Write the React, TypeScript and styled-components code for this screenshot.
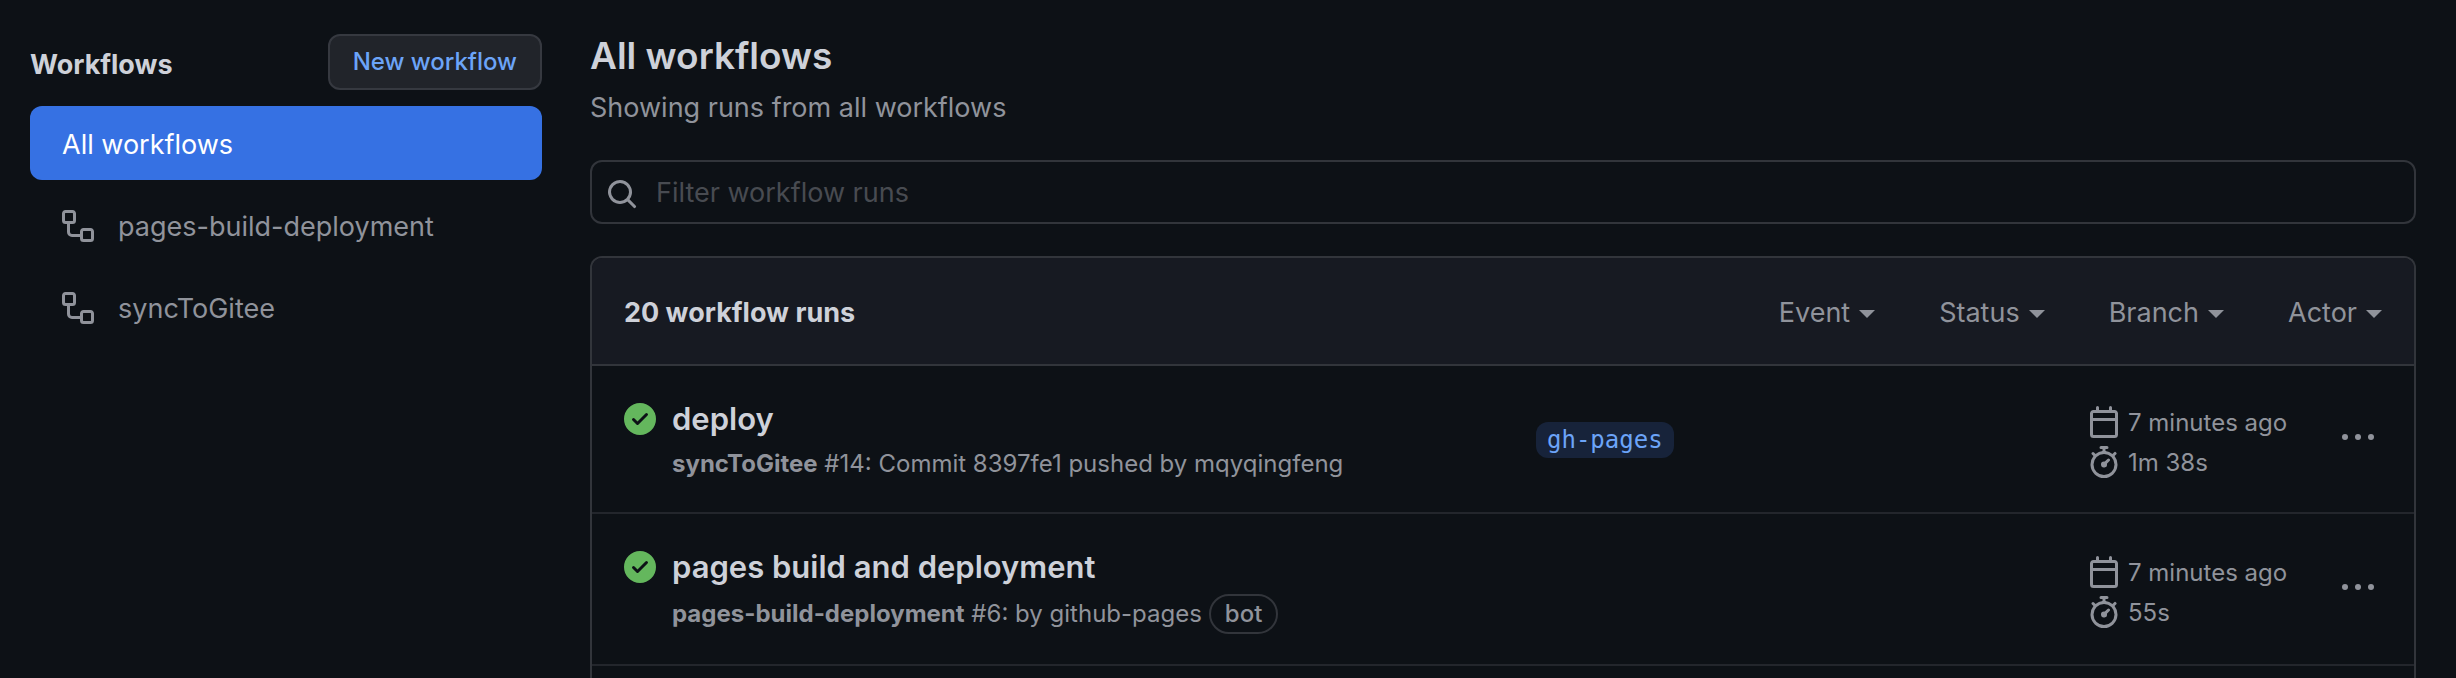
import React from "react";
import styled, { createGlobalStyle } from "styled-components";

const color = {
  canvas: "#0d1116",
  subtle: "#171a22",
  border: "#32353b",
  borderMuted: "#23262c",
  text: "#ced1d9",
  muted: "#90939b",
  placeholder: "#484b51",
  accent: "#3671e3",
  link: "#6ca4f8",
  branchBg: "#17233a",
  success: "#64b75d",
};

const GlobalStyle = createGlobalStyle`
  *, *::before, *::after { box-sizing: border-box; }
  body {
    margin: 0;
    background: ${color.canvas};
    color: ${color.text};
    font-family: Inter, "Liberation Sans", sans-serif;
    font-size: 27px;
  }
  h1, h2, h3, p, ul { margin: 0; padding: 0; }
  ul { list-style: none; }
  a { color: inherit; text-decoration: none; }
  button, input { font: inherit; color: inherit; }
`;

const Page = styled.div`
  display: flex;
  gap: 48px;
  min-height: 100vh;
  padding: 34px 40px 0 30px;
`;

const Sidebar = styled.aside`
  flex: 0 0 512px;
`;

const SidebarHeader = styled.div`
  display: flex;
  align-items: flex-end;
  justify-content: space-between;
  margin-bottom: 16px;
`;

const SidebarTitle = styled.h2`
  font-size: 27px;
  font-weight: 700;
  line-height: 50px;
`;

const NewWorkflowButton = styled.button`
  height: 56px;
  padding: 0 23px 2px;
  border: 2px solid #363940;
  border-radius: 12px;
  background: #21242a;
  color: ${color.link};
  font-size: 24px;
  font-weight: 500;
  cursor: pointer;
`;

const NavList = styled.ul`
  display: flex;
  flex-direction: column;
  gap: 8px;
`;

const NavLink = styled.a<{ $active?: boolean }>`
  display: flex;
  align-items: center;
  gap: 24px;
  height: 74px;
  padding: 2px 32px 0;
  border-radius: 12px;
  background: ${(p) => (p.$active ? color.accent : "transparent")};
  color: ${(p) => (p.$active ? "#ffffff" : color.muted)};
`;

const Main = styled.main`
  display: flex;
  flex: 1;
  flex-direction: column;
  min-width: 0;
`;

const Title = styled.h1`
  margin-bottom: 8px;
  font-size: 37px;
  font-weight: 600;
  line-height: 44px;
`;

const Subtitle = styled.p`
  margin-bottom: 30px;
  color: ${color.muted};
  line-height: 44px;
`;

const SearchBox = styled.label`
  display: flex;
  align-items: center;
  gap: 18px;
  height: 64px;
  margin-bottom: 32px;
  padding: 0 14px;
  border: 2px solid ${color.border};
  border-radius: 12px;
  color: ${color.muted};
`;

const SearchInput = styled.input`
  flex: 1;
  min-width: 0;
  padding: 0;
  border: 0;
  outline: 0;
  background: transparent;
  color: ${color.text};
  &::placeholder {
    color: ${color.placeholder};
    opacity: 1;
  }
`;

const RunsBox = styled.section`
  flex: 1;
  border: 2px solid ${color.border};
  border-bottom: 0;
  border-radius: 12px 12px 0 0;
  overflow: hidden;
`;

const RunsHeader = styled.header`
  display: flex;
  align-items: center;
  justify-content: space-between;
  height: 108px;
  padding: 2px 32px 0;
  border-bottom: 2px solid ${color.border};
  background: ${color.subtle};
`;

const RunsCount = styled.h2`
  font-size: 27px;
  font-weight: 700;
`;

const Filters = styled.div`
  display: flex;
  gap: 64px;
`;

const FilterButton = styled.button`
  display: flex;
  align-items: center;
  gap: 9px;
  padding: 0;
  border: 0;
  background: none;
  color: ${color.muted};
  cursor: pointer;
  &::after {
    content: "";
    margin-top: 4px;
    border: 8px solid transparent;
    border-top-color: currentColor;
    border-bottom: 0;
  }
`;

const RunRow = styled.li`
  display: grid;
  grid-template-columns: minmax(0, 38fr) minmax(0, 23fr) 254px 40px;
  align-items: center;
  padding: 32px 32px 30px;
  border-bottom: 2px solid ${color.borderMuted};
  color: ${color.muted};
  font-size: 24px;
`;

const RunInfo = styled.div`
  display: grid;
  grid-template-columns: 32px minmax(0, 1fr);
  column-gap: 16px;
  row-gap: 6px;
  align-items: center;
`;

const RunTitle = styled.h3`
  color: ${color.text};
  font-size: 31px;
  font-weight: 600;
  line-height: 42px;
`;

const RunMeta = styled.p`
  grid-column: 2;
  line-height: 36px;
  display: flex;
  align-items: center;
  gap: 7px;
`;

const BotLabel = styled.span`
  height: 40px;
  padding: 0 14px;
  border: 2px solid ${color.border};
  border-radius: 20px;
  font-weight: 500;
`;

const BranchLink = styled.a`
  display: inline-block;
  padding: 0 11px;
  border-radius: 12px;
  background: ${color.branchBg};
  color: ${color.link};
  font-family: "DejaVu Sans Mono", "Liberation Mono", monospace;
  line-height: 36px;
`;

const Timing = styled.div`
  padding-top: 4px;
`;

const TimingLine = styled.div`
  display: flex;
  align-items: center;
  gap: 8px;
  line-height: 40px;
`;

const TimingText = styled.span`
  padding-top: 2px;
  line-height: 38px;
`;

const MenuButton = styled.button`
  display: flex;
  width: 32px;
  padding: 0 0 4px;
  border: 0;
  background: none;
  cursor: pointer;
`;

const Svg = styled.svg<{ $shift?: boolean }>`
  flex: none;
  width: 32px;
  height: 32px;
  margin-top: ${(p) => (p.$shift ? "4px" : "0")};
  fill: currentColor;
`;

const SuccessSvg = styled(Svg)`
  color: ${color.success};
`;

const WorkflowIcon = () => (
  <Svg viewBox="0 0 16 16" aria-hidden="true">
    <path
      fillRule="evenodd"
      d="M0 1.75C0 .784.784 0 1.75 0h3.5C6.216 0 7 .784 7 1.75v3.5A1.75 1.75 0 015.25 7H4v4a1 1 0 001 1h4v-1.25C9 9.784 9.784 9 10.75 9h3.5c.966 0 1.75.784 1.75 1.75v3.5A1.75 1.75 0 0114.25 16h-3.5A1.75 1.75 0 019 14.25v-.75H5A2.5 2.5 0 012.5 11V7h-.75A1.75 1.75 0 010 5.25v-3.5zm1.75-.25a.25.25 0 00-.25.25v3.5c0 .138.112.25.25.25h3.5a.25.25 0 00.25-.25v-3.5a.25.25 0 00-.25-.25h-3.5zm9 9a.25.25 0 00-.25.25v3.5c0 .138.112.25.25.25h3.5a.25.25 0 00.25-.25v-3.5a.25.25 0 00-.25-.25h-3.5z"
    />
  </Svg>
);

const SearchIcon = () => (
  <Svg $shift viewBox="0 0 16 16" aria-hidden="true">
    <path
      fillRule="evenodd"
      d="M11.5 7a4.499 4.499 0 11-8.998 0A4.499 4.499 0 0111.5 7zm-.82 4.74a6 6 0 111.06-1.06l3.04 3.04a.75.75 0 11-1.06 1.06l-3.04-3.04z"
    />
  </Svg>
);

const CheckIcon = () => (
  <SuccessSvg viewBox="0 0 16 16" role="img" aria-label="completed successfully">
    <path
      fillRule="evenodd"
      d="M8 16A8 8 0 108 0a8 8 0 000 16zm3.78-9.72a.75.75 0 00-1.06-1.06L6.75 9.19 5.28 7.72a.75.75 0 00-1.06 1.06l2 2a.75.75 0 001.06 0l4.5-4.5z"
    />
  </SuccessSvg>
);

const CalendarIcon = () => (
  <Svg viewBox="0 0 16 16" aria-hidden="true">
    <path
      fillRule="evenodd"
      d="M4.75 0a.75.75 0 01.75.75V2h5V.75a.75.75 0 011.5 0V2h1.25c.966 0 1.75.784 1.75 1.75v10.5A1.75 1.75 0 0113.25 16H2.75A1.75 1.75 0 011 14.25V3.75C1 2.784 1.784 2 2.75 2H4V.75A.75.75 0 014.75 0zm0 3.5h-2a.25.25 0 00-.25.25V6h11V3.75a.25.25 0 00-.25-.25h-8.5zm8.75 4h-11v6.75c0 .138.112.25.25.25h10.5a.25.25 0 00.25-.25V7.5z"
    />
  </Svg>
);

const StopwatchIcon = () => (
  <Svg viewBox="0 0 16 16" aria-hidden="true">
    <path
      fillRule="evenodd"
      d="M5.75.75A.75.75 0 016.5 0h3a.75.75 0 010 1.5h-.75v1l-.001.041a6.718 6.718 0 013.464 1.435l.007-.006.75-.75a.75.75 0 111.06 1.06l-.75.75-.006.007a6.75 6.75 0 11-10.548 0L2.72 5.03l-.75-.75a.75.75 0 011.06-1.06l.75.75.007.006A6.718 6.718 0 017.25 2.541a.756.756 0 010-.041v-1H6.5a.75.75 0 01-.75-.75zM8 14.5A5.25 5.25 0 108 4a5.25 5.25 0 000 10.5zm.389-6.7l1.33-1.33a.75.75 0 111.061 1.06L9.45 8.861A1.502 1.502 0 118 7.75c.135 0 .266.018.389.05z"
    />
  </Svg>
);

const KebabIcon = () => (
  <Svg viewBox="0 0 16 16" aria-hidden="true">
    <circle cx="1.5" cy="7.5" r="1.5" />
    <circle cx="8" cy="7.5" r="1.5" />
    <circle cx="14.5" cy="7.5" r="1.5" />
  </Svg>
);

interface Run {
  title: string;
  workflow: string;
  detail: string;
  bot?: boolean;
  branch?: string;
  started: string;
  duration: string;
}

const workflows = ["pages-build-deployment", "syncToGitee"];
const filters = ["Event", "Status", "Branch", "Actor"];
const runs: Run[] = [
  {
    title: "deploy",
    workflow: "syncToGitee",
    detail: "#14: Commit 8397fe1 pushed by mqyqingfeng",
    branch: "gh-pages",
    started: "7 minutes ago",
    duration: "1m 38s",
  },
  {
    title: "pages build and deployment",
    workflow: "pages-build-deployment",
    detail: "#6: by github-pages",
    bot: true,
    started: "7 minutes ago",
    duration: "55s",
  },
];

const RunItem = ({ run }: { run: Run }) => (
  <RunRow>
    <RunInfo>
      <CheckIcon />
      <RunTitle>
        <a href="#run">{run.title}</a>
      </RunTitle>
      <RunMeta>
        <span>
          <b>{run.workflow}</b> {run.detail}
        </span>
        {run.bot && <BotLabel>bot</BotLabel>}
      </RunMeta>
    </RunInfo>
    <div>{run.branch && <BranchLink href="#branch">{run.branch}</BranchLink>}</div>
    <Timing>
      <TimingLine>
        <CalendarIcon />
        <TimingText>{run.started}</TimingText>
      </TimingLine>
      <TimingLine>
        <StopwatchIcon />
        <TimingText>{run.duration}</TimingText>
      </TimingLine>
    </Timing>
    <MenuButton type="button" aria-label="Show options">
      <KebabIcon />
    </MenuButton>
  </RunRow>
);

export default function App() {
  return (
    <>
      <GlobalStyle />
      <Page>
        <Sidebar>
          <SidebarHeader>
            <SidebarTitle>Workflows</SidebarTitle>
            <NewWorkflowButton type="button">New workflow</NewWorkflowButton>
          </SidebarHeader>
          <nav aria-label="Workflows">
            <NavList>
              <li>
                <NavLink href="#all" $active aria-current="page">
                  All workflows
                </NavLink>
              </li>
              {workflows.map((name) => (
                <li key={name}>
                  <NavLink href={`#${name}`}>
                    <WorkflowIcon />
                    {name}
                  </NavLink>
                </li>
              ))}
            </NavList>
          </nav>
        </Sidebar>
        <Main>
          <Title>All workflows</Title>
          <Subtitle>Showing runs from all workflows</Subtitle>
          <SearchBox>
            <SearchIcon />
            <SearchInput type="text" placeholder="Filter workflow runs" aria-label="Filter workflow runs" />
          </SearchBox>
          <RunsBox>
            <RunsHeader>
              <RunsCount>20 workflow runs</RunsCount>
              <Filters>
                {filters.map((name) => (
                  <FilterButton key={name} type="button">
                    {name}
                  </FilterButton>
                ))}
              </Filters>
            </RunsHeader>
            <ul>
              {runs.map((run) => (
                <RunItem key={run.title} run={run} />
              ))}
            </ul>
          </RunsBox>
        </Main>
      </Page>
    </>
  );
}
